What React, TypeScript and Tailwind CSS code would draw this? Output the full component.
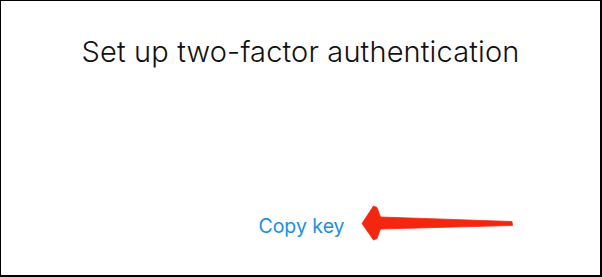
import React from "react";

export default function App() {
  return (
    <div className="w-[602px] h-[277px] bg-white border-t border-l border-r-2 border-b-2 border-black flex flex-col items-center overflow-hidden" style={{ fontFamily: "Inter, 'Noto Sans', sans-serif" }}>
      <h1 className="mt-[33px] text-[29px] leading-[36px] font-light text-[#111] tracking-[0.15px]">
        Set up two-factor authentication
      </h1>
      <div className="relative mt-[144px] ml-[2px]">
        <span className="text-[19.5px] leading-[24px] text-[#1d8fe0]">Copy key</span>
        <svg
          className="absolute left-[103px] top-[-9px]"
          width="153"
          height="36"
          viewBox="0 0 153 36"
        >
          <path
            d="M1 18.5 L12.5 1 L16 2.5 L19.5 12 L151 16.5 L151.5 20.5 L19.5 24 L16 33.5 L12.5 35 Z"
            fill="#f5260f"
            stroke="#f5260f"
            strokeWidth="0.8"
            strokeLinejoin="round"
          />
        </svg>
      </div>
    </div>
  );
}
